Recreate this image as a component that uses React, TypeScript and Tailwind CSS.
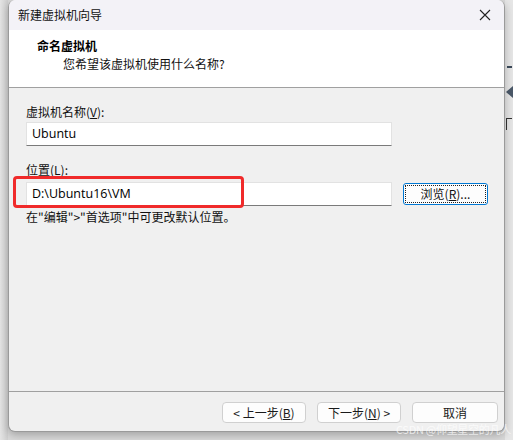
import React from 'react'

const cjk = { fontFamily: '"Noto Sans CJK SC", "Noto Sans", sans-serif' }

function Btn({ children, className = '' }: { children: React.ReactNode; className?: string }) {
  return (
    <div
      className={`h-[21px] flex items-center justify-center rounded-[4px] border border-[#d0d0d0] bg-[#fdfdfd] text-[12px] text-[#1a1a1a] ${className}`}
    >
      {children}
    </div>
  )
}

export default function App() {
  return (
    <div className="relative w-[513px] h-[440px] overflow-hidden bg-[#d9d9d9]" style={cjk}>
      {/* background bits on the right */}
      <div className="absolute right-0 top-0 w-[8px] h-[440px] overflow-hidden bg-[#e6e6e6]">
        <div className="absolute left-[2px] top-[66px] w-[5px] h-[2px] bg-[#3c4a5a]" />
        <div className="absolute left-[1px] top-[86px] w-0 h-0 border-y-[6px] border-y-transparent border-r-[7px] border-r-[#4a5868]" />
        <div className="absolute left-[1px] top-[118px] w-[6px] h-[12px] border-l border-t border-[#333]" />
      </div>
      <div className="absolute left-0 top-0 w-[8px] h-[440px] bg-gradient-to-r from-[#e4e4e4] to-[#cfcfcf]" />

      <div className="relative ml-[8px] w-[497px] h-[432px] flex flex-col rounded-[7px] overflow-hidden border border-[#9a9a9a] border-t-0 bg-[#f0f0f0] shadow-[0_3px_8px_rgba(0,0,0,0.25)]">
        {/* title bar */}
        <div className="h-[30px] flex items-center justify-between bg-[#f3f2f7] pl-[9px] pr-[10px]">
          <span className="text-[12px] text-[#111]">新建虚拟机向导</span>
          <svg width="12" height="12" viewBox="0 0 12 12" className="mr-[3px]">
            <path d="M1 1 L11 11 M11 1 L1 11" stroke="#222" strokeWidth="1.1" />
          </svg>
        </div>

        {/* header */}
        <div className="h-[58px] bg-white border-b border-[#a0a0a0] pl-[28px] pt-[7px]">
          <div className="text-[12px] font-bold text-black leading-[18px]">命名虚拟机</div>
          <div className="text-[12px] text-[#111] leading-[18px] pl-[26px]">您希望该虚拟机使用什么名称?</div>
        </div>

        {/* body */}
        <div className="relative flex-1 pl-[17px] pt-[15px]">
          <div className="text-[12px] text-[#111] leading-[18px]">
            虚拟机名称(<span className="underline">V</span>):
          </div>
          <div className="mt-[1px] w-[366px] h-[24px] flex items-center bg-white border border-[#e2e2e2] border-b-[#7a7a7a] pl-[5px] text-[12.5px] text-black" style={{ fontFamily: '"Open Sans", "Noto Sans", sans-serif' }}>
            Ubuntu
          </div>

          <div className="mt-[15px] text-[12px] text-[#111] leading-[18px]">
            位置(<span className="underline">L</span>):
          </div>
          <div className="mt-[3px] flex items-center gap-[11px]">
            <div className="w-[366px] h-[24px] flex items-center bg-white border border-[#e2e2e2] border-b-[#7a7a7a] pl-[5px] text-[12.5px] text-black" style={{ fontFamily: '"Open Sans", "Noto Sans", sans-serif' }}>
              D:\Ubuntu16\VM
            </div>
            <div className="w-[85px] h-[22px] rounded-[3px] border border-[#0078d4] bg-[#fdfdfd] p-[1px]">
              <div className="h-full flex items-center justify-center border border-dotted border-[#222] text-[12px] text-[#111]">
                浏览(<span className="underline">R</span>)...
              </div>
            </div>
          </div>
          <div className="mt-[2px] text-[12px] text-[#111] leading-[18px]">在"编辑"&gt;"首选项"中可更改默认位置。</div>

          {/* red annotation */}
          <div className="absolute left-[4px] top-[88px] w-[231px] h-[32px] rounded-[4px] border-[3px] border-[#f02a2a]" />
        </div>

        {/* footer */}
        <div className="h-[40px] border-t border-[#a0a0a0] flex items-start pt-[10px] pl-[213px] gap-[11px]">
          <Btn className="w-[84px]">
            &lt; 上一步(<span className="underline">B</span>)
          </Btn>
          <Btn className="w-[84px]">
            下一步(<span className="underline">N</span>) &gt;
          </Btn>
          <Btn className="w-[86px]">取消</Btn>
        </div>
      </div>

      <div className="absolute right-[2px] bottom-[3px] text-[11px] text-white/70 tracking-tight">CSDN @仰望星空的凡人</div>
    </div>
  )
}
